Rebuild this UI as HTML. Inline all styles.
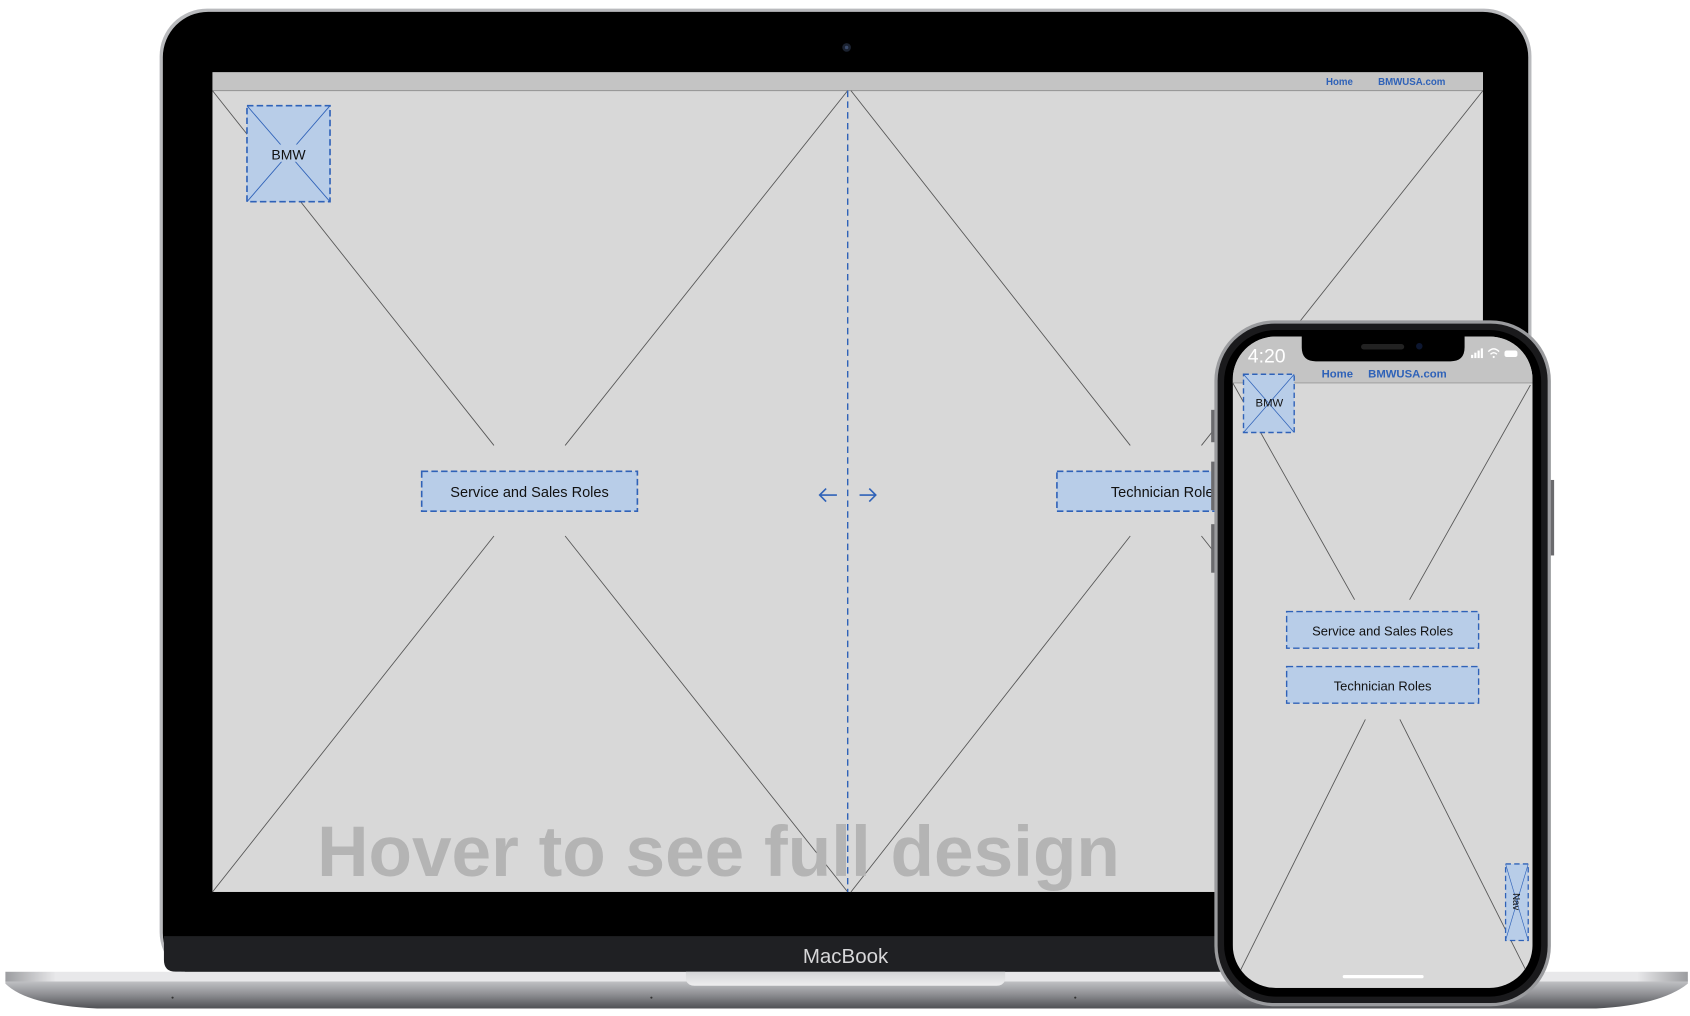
<!DOCTYPE html>
<html><head><meta charset="utf-8"><style>
html,body{margin:0;padding:0;background:#fff;width:1690px;height:1016px;overflow:hidden}
svg{display:block}
text{font-family:"Liberation Sans",Arial,sans-serif}
</style></head><body>
<svg width="1690" height="1016" viewBox="0 0 1567 942" preserveAspectRatio="none" xmlns="http://www.w3.org/2000/svg">
<defs>
<linearGradient id="base" x1="0" y1="0" x2="0" y2="1">
<stop offset="0" stop-color="#c4c5c8"/><stop offset="0.5" stop-color="#8e8f93"/><stop offset="1" stop-color="#505155"/></linearGradient>
<linearGradient id="strip" x1="0" y1="0" x2="1" y2="0">
<stop offset="0" stop-color="#9c9da0"/><stop offset="0.03" stop-color="#e8e8ea"/><stop offset="0.97" stop-color="#e8e8ea"/><stop offset="1" stop-color="#9c9da0"/></linearGradient>
<linearGradient id="notch" x1="0" y1="0" x2="0" y2="1">
<stop offset="0" stop-color="#d4d5d7"/><stop offset="1" stop-color="#eeeeef"/></linearGradient>
</defs>
<!-- laptop lid -->
<rect x="148" y="8" width="1272" height="900" rx="44" fill="#b9babd"/>
<rect x="151" y="11" width="1266" height="896" rx="42" fill="#000"/>
<path d="M152 868 H1416 V890 Q1416 901 1405 901 H163 Q152 901 152 890 Z" fill="#1f2023"/>
<text x="784" y="893" font-size="19" fill="#d6d6d8" text-anchor="middle">MacBook</text>
<circle cx="785" cy="44" r="4" fill="#1b2230"/><circle cx="785" cy="44" r="1.6" fill="#3a4a6a"/>
<!-- base -->
<path d="M5 909 L1565 909 L1565 912 Q1540 932 1480 935 L90 935 Q25 932 5 912 Z" fill="url(#base)"/>
<rect x="5" y="901" width="1560" height="9" fill="url(#strip)"/>
<path d="M636 901 L932 901 L932 909 Q930 914 924 914 L644 914 Q638 914 636 909 Z" fill="url(#notch)"/>
<circle cx="160" cy="925" r="1" fill="#333"/><circle cx="604" cy="925" r="1" fill="#333"/><circle cx="997" cy="925" r="1" fill="#333"/>
<!-- screen -->
<rect x="197" y="67" width="1178" height="760" fill="#d8d8d8"/>
<rect x="197" y="67" width="1178" height="17" fill="#c4c4c4"/>
<line x1="197" y1="84" x2="1375" y2="84" stroke="#999" stroke-width="1"/>
<text x="1242" y="79" font-size="9" font-weight="bold" fill="#2f62b8" text-anchor="middle">Home</text>
<text x="1309" y="79" font-size="9" font-weight="bold" fill="#2f62b8" text-anchor="middle">BMWUSA.com</text>
<g stroke="#555" stroke-width="0.8" fill="none">
<line x1="197" y1="84" x2="458" y2="413"/><line x1="786" y1="84" x2="524" y2="413"/>
<line x1="197" y1="827" x2="458" y2="497"/><line x1="786" y1="827" x2="524" y2="497"/>
<line x1="789" y1="84" x2="1048" y2="413"/><line x1="1375" y1="84" x2="1114" y2="413"/>
<line x1="789" y1="827" x2="1048" y2="497"/><line x1="1375" y1="827" x2="1114" y2="497"/>
</g>
<line x1="786" y1="84" x2="786" y2="827" stroke="#2f62b8" stroke-width="1.3" stroke-dasharray="6,4"/>
<!-- BMW box -->
<rect x="229" y="98" width="77" height="89" fill="#b8cde8" stroke="#2f62b8" stroke-width="1.5" stroke-dasharray="6,3"/>
<line x1="229" y1="98" x2="306" y2="187" stroke="#2f62b8" stroke-width="0.8"/><line x1="306" y1="98" x2="229" y2="187" stroke="#2f62b8" stroke-width="0.8"/>
<rect x="249" y="134" width="38" height="16" fill="#b8cde8"/>
<text x="267.5" y="148" font-size="13" fill="#111" text-anchor="middle">BMW</text>
<!-- buttons -->
<rect x="391" y="437" width="200" height="37" fill="#b8cde8" stroke="#2f62b8" stroke-width="1.5" stroke-dasharray="6,3"/>
<text x="491" y="461" font-size="13.5" fill="#111" text-anchor="middle">Service and Sales Roles</text>
<rect x="980" y="437" width="160" height="37" fill="#b8cde8" stroke="#2f62b8" stroke-width="1.5" stroke-dasharray="6,3"/>
<text x="1030" y="461" font-size="13.5" fill="#111">Technician Roles</text>
<g stroke="#2f62b8" stroke-width="1.5" fill="none">
<path d="M776 459 H760 M766 453 L760 459 L766 465"/><path d="M797 459 H812 M806 453 L812 459 L806 465"/>
</g>
<text x="294" y="812" font-size="66" font-weight="bold" fill="#b4b4b4">Hover to see full design</text>
<!-- phone -->
<rect x="1123" y="380" width="5" height="30" fill="#6b6b6e"/>
<rect x="1123" y="428" width="5" height="45" fill="#6b6b6e"/>
<rect x="1123" y="486" width="5" height="45" fill="#6b6b6e"/>
<rect x="1436" y="445" width="5" height="70" fill="#6b6b6e"/>
<rect x="1126" y="297" width="312" height="636" rx="56" fill="#9a9b9e"/>
<rect x="1129" y="300" width="306" height="630" rx="53" fill="#1a1a1c"/>
<rect x="1135" y="306" width="294" height="618" rx="48" fill="#000"/>
<clipPath id="ps"><rect x="1143" y="312" width="278" height="604" rx="40"/></clipPath>
<g clip-path="url(#ps)">
<rect x="1143" y="312" width="278" height="604" fill="#d8d8d8"/>
<rect x="1143" y="312" width="278" height="43" fill="#c4c4c4"/>
<line x1="1143" y1="355" x2="1421" y2="355" stroke="#999" stroke-width="0.8"/>
<g stroke="#555" stroke-width="0.8">
<line x1="1143" y1="355" x2="1256" y2="556"/><line x1="1419" y1="357" x2="1307" y2="556"/>
<line x1="1266" y1="667" x2="1150" y2="900"/><line x1="1298" y1="667" x2="1415" y2="900"/>
</g>
<path d="M1207 312 V322 Q1207 335 1220 335 H1345 Q1358 335 1358 322 V312 Z" fill="#000"/>
<rect x="1262" y="319" width="40" height="5" rx="2.5" fill="#222"/>
<circle cx="1316" cy="321" r="3" fill="#0c1630"/>
<text x="1157" y="336" font-size="18" fill="#fff">4:20</text>
<rect x="1364" y="329" width="2" height="3" fill="#fff"/><rect x="1367" y="327" width="2" height="5" fill="#fff"/><rect x="1370" y="325" width="2" height="7" fill="#fff"/><rect x="1373" y="323" width="2" height="9" fill="#fff"/>
<path d="M1380 326 Q1385 321 1390 326 M1382 328.5 Q1385 325.5 1388 328.5" stroke="#fff" stroke-width="1.3" fill="none"/><circle cx="1385" cy="331" r="1" fill="#fff"/>
<rect x="1395" y="325" width="12" height="6" rx="2" fill="#fff"/>
<text x="1240" y="350" font-size="10.5" font-weight="bold" fill="#2f62b8" text-anchor="middle">Home</text>
<text x="1305" y="350" font-size="10.5" font-weight="bold" fill="#2f62b8" text-anchor="middle">BMWUSA.com</text>
<rect x="1153" y="347" width="47" height="54" fill="#b8cde8" stroke="#2f62b8" stroke-width="1.3" stroke-dasharray="5,3"/>
<line x1="1153" y1="347" x2="1200" y2="401" stroke="#2f62b8" stroke-width="0.7"/><line x1="1200" y1="347" x2="1153" y2="401" stroke="#2f62b8" stroke-width="0.7"/>
<text x="1177" y="377" font-size="10.5" fill="#111" text-anchor="middle">BMW</text>
<rect x="1193" y="567" width="178" height="34" fill="#b8cde8" stroke="#2f62b8" stroke-width="1.3" stroke-dasharray="6,3"/>
<text x="1282" y="589" font-size="12" fill="#111" text-anchor="middle">Service and Sales Roles</text>
<rect x="1193" y="618" width="178" height="34" fill="#b8cde8" stroke="#2f62b8" stroke-width="1.3" stroke-dasharray="6,3"/>
<text x="1282" y="640" font-size="12" fill="#111" text-anchor="middle">Technician Roles</text>
<rect x="1396" y="801" width="21" height="71" fill="#b8cde8" stroke="#2f62b8" stroke-width="1.2" stroke-dasharray="5,3"/>
<line x1="1396" y1="801" x2="1417" y2="872" stroke="#2f62b8" stroke-width="0.6"/><line x1="1417" y1="801" x2="1396" y2="872" stroke="#2f62b8" stroke-width="0.6"/>
<text transform="translate(1403,836) rotate(90)" font-size="9" fill="#111" text-anchor="middle">Nav</text>
<rect x="1245" y="904" width="75" height="3" rx="1.5" fill="#fff"/>
</g>
</svg>
</body></html>
